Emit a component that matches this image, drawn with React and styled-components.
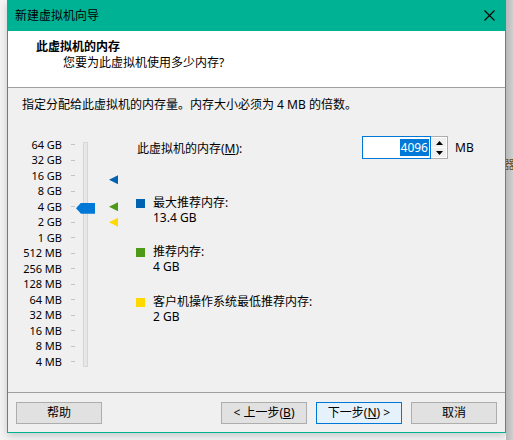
import React from 'react';
import styled, { createGlobalStyle } from 'styled-components';

const GlobalStyle = createGlobalStyle`
  html, body {
    margin: 0;
    padding: 0;
    background: #f4f4f4;
  }
  body {
    font-family: "Noto Sans", "Noto Sans CJK SC", sans-serif;
    font-size: 12px;
    color: #000;
  }
`;

const SCALE = ['64 GB', '32 GB', '16 GB', '8 GB', '4 GB', '2 GB', '1 GB', '512 MB', '256 MB', '128 MB', '64 MB', '32 MB', '16 MB', '8 MB', '4 MB'];
const ROW = 15.5;

// position of a memory value (in GB) on the scale, relative to the first row
const posOf = (gb) => (6 - Math.log2(gb)) * ROW + ROW / 2;

const MARKERS = [
  { gb: 13.4, color: '#0063b1' },
  { gb: 4, color: '#4c9a17' },
  { gb: 2, color: '#ffd800' },
];

const LEGEND = [
  { color: '#0063b1', label: '最大推荐内存:', value: '13.4 GB' },
  { color: '#4c9a17', label: '推荐内存:', value: '4 GB' },
  { color: '#ffd800', label: '客户机操作系统最低推荐内存:', value: '2 GB' },
];

const App = () => {
  return (
    <>
      <GlobalStyle />
      <Page>
        <Window>
          <TitleBar>
            <TitleText>新建虚拟机向导</TitleText>
            <CloseButton>
              <svg width='11' height='11' viewBox='0 0 11 11'>
                <path d='M0.5 0.5 L10.5 10.5 M10.5 0.5 L0.5 10.5' stroke='#000' strokeWidth='1.1' />
              </svg>
            </CloseButton>
          </TitleBar>

          <Header>
            <HeaderTitle>此虚拟机的内存</HeaderTitle>
            <HeaderSub>您要为此虚拟机使用多少内存?</HeaderSub>
          </Header>

          <Body>
            <Intro>指定分配给此虚拟机的内存量。内存大小必须为 4 MB 的倍数。</Intro>
            <Main>
              <Slider>
                <Scale>
                  {SCALE.map((s) => (
                    <ScaleRow key={s}>
                      <ScaleLabel>{s}</ScaleLabel>
                      <Tick />
                    </ScaleRow>
                  ))}
                </Scale>
                <Track>
                  <Thumb style={{ top: posOf(4) - 4.5 - 5.5 }} />
                </Track>
                <Markers>
                  {MARKERS.map((m) => (
                    <Marker key={m.gb} color={m.color} style={{ top: posOf(m.gb) - 4.5 }} />
                  ))}
                </Markers>
              </Slider>

              <RightCol>
                <MemoryRow>
                  <MemoryLabel>
                    此虚拟机的内存(<u>M</u>):
                  </MemoryLabel>
                  <NumberBox>
                    <Selected>4096</Selected>
                  </NumberBox>
                  <Spin>
                    <SpinHalf>
                      <svg width='7' height='4' viewBox='0 0 7 4'>
                        <path d='M0 4 L3.5 0 L7 4 Z' fill='#000' />
                      </svg>
                    </SpinHalf>
                    <SpinHalf>
                      <svg width='7' height='4' viewBox='0 0 7 4'>
                        <path d='M0 0 L3.5 4 L7 0 Z' fill='#000' />
                      </svg>
                    </SpinHalf>
                  </Spin>
                  <Unit>MB</Unit>
                </MemoryRow>

                <Legend>
                  {LEGEND.map((l) => (
                    <LegendItem key={l.label}>
                      <Swatch color={l.color} />
                      <div>
                        <LegendLine>{l.label}</LegendLine>
                        <LegendLine>{l.value}</LegendLine>
                      </div>
                    </LegendItem>
                  ))}
                </Legend>
              </RightCol>
            </Main>
          </Body>

          <Footer>
            <Button>帮助</Button>
            <Spacer />
            <Button>
              &lt; 上一步(<u>B</u>)
            </Button>
            <Button primary>
              下一步(<u>N</u>) &gt;
            </Button>
            <Button>取消</Button>
          </Footer>
        </Window>
        <Behind>
          <BehindText>器</BehindText>
        </Behind>
      </Page>
    </>
  );
};

export default App;

const Page = styled.div`
  display: flex;
  width: 513px;
  height: 440px;
  padding-left: 7px;
  box-sizing: border-box;
  overflow: hidden;
`;

const Window = styled.div`
  width: 499px;
  height: 433px;
  flex: none;
  box-sizing: border-box;
  border: 1px solid #00b294;
  border-top: none;
  display: flex;
  flex-direction: column;
  background: #f0f0f0;
  box-shadow: 0 3px 8px rgba(0, 0, 0, 0.18);
`;

const TitleBar = styled.div`
  height: 31px;
  background: #00b294;
  display: flex;
  align-items: center;
  justify-content: space-between;
  padding: 0 11px 0 8px;
  margin: 0 -1px;
`;

const TitleText = styled.span`
  font-size: 12px;
  line-height: 16px;
`;

const CloseButton = styled.div`
  width: 11px;
  height: 11px;
  display: flex;
`;

const Header = styled.div`
  height: 56px;
  background: #fff;
  border-bottom: 1px solid #a0a0a0;
  padding: 8px 0 0 28px;
  box-sizing: content-box;
  height: 48px;
`;

const HeaderTitle = styled.div`
  font-weight: 700;
  line-height: 16px;
`;

const HeaderSub = styled.div`
  line-height: 16px;
  padding-left: 27px;
`;

const Body = styled.div`
  height: 304px;
  border-bottom: 1px solid #a0a0a0;
  padding: 9px 0 0 14px;
  box-sizing: border-box;
  height: 305px;
`;

const Intro = styled.div`
  line-height: 16px;
`;

const Main = styled.div`
  display: flex;
  margin-top: 23px;
  margin-left: -2px;
`;

const Slider = styled.div`
  display: flex;
  width: 116px;
  padding-top: 1px;
`;

const Scale = styled.div`
  display: flex;
  flex-direction: column;
`;

const ScaleRow = styled.div`
  height: ${ROW}px;
  display: flex;
  align-items: center;
`;

const ScaleLabel = styled.span`
  width: 42px;
  text-align: right;
  font-size: 11px;
  line-height: 14px;
  white-space: nowrap;
`;

const Tick = styled.span`
  width: 4px;
  height: 1px;
  margin-left: 9px;
  background: #c4c4c4;
`;

const Track = styled.div`
  position: relative;
  width: 3px;
  height: 223px;
  margin: 5px 0 0 8px;
  background: #e7e7e7;
  border: 1px solid #d6d6d6;
`;

const Thumb = styled.div`
  position: absolute;
  left: -8px;
  width: 19px;
  height: 11px;
  background: #0078d7;
  clip-path: polygon(0 50%, 5px 0, 100% 0, 100% 100%, 5px 100%);
`;

const Markers = styled.div`
  position: relative;
  width: 9px;
  margin-left: 21px;
`;

const Marker = styled.div`
  position: absolute;
  left: 0;
  width: 9px;
  height: 9px;
  background: ${(props) => props.color};
  clip-path: polygon(0 50%, 100% 0, 100% 100%);
`;

const RightCol = styled.div`
  display: flex;
  flex-direction: column;
  padding-left: 0;
`;

const MemoryRow = styled.div`
  display: flex;
  align-items: center;
  height: 23px;
`;

const MemoryLabel = styled.span`
  width: 226px;
  padding-left: 1px;
  box-sizing: border-box;
  line-height: 16px;
  margin-top: 2px;
`;

const NumberBox = styled.div`
  width: 69px;
  height: 23px;
  box-sizing: border-box;
  border: 1px solid #0078d7;
  background: #fff;
  display: flex;
  align-items: center;
  justify-content: flex-end;
  padding-right: 1px;
`;

const Selected = styled.span`
  background: #0078d7;
  color: #fff;
  line-height: 17px;
  padding: 0 1px;
`;

const Spin = styled.div`
  width: 17px;
  height: 23px;
  box-sizing: border-box;
  border: 1px solid #adadad;
  border-left: none;
  background: #fff;
  display: flex;
  flex-direction: column;
  padding: 1px;
  gap: 1px;
`;

const SpinHalf = styled.div`
  flex: 1;
  background: #f0f0f0;
  display: flex;
  align-items: center;
  justify-content: center;
`;

const Unit = styled.span`
  margin-left: 7px;
  line-height: 16px;
`;

const Legend = styled.div`
  display: flex;
  flex-direction: column;
  gap: 19.5px;
  margin-top: 35.5px;
`;

const LegendItem = styled.div`
  display: flex;
  align-items: flex-start;
`;

const Swatch = styled.span`
  width: 9px;
  height: 9px;
  margin: 4px 8px 0 0;
  background: ${(props) => props.color};
`;

const LegendLine = styled.div`
  line-height: 15px;
  white-space: nowrap;
`;

const Footer = styled.div`
  display: flex;
  align-items: flex-start;
  gap: 9px;
  padding: 9px 0 0 8px;
  flex: 1;
`;

const Spacer = styled.div`
  flex: 1;
`;

const Button = styled.div`
  width: 86px;
  height: 22px;
  box-sizing: border-box;
  border: 1px solid ${(props) => (props.primary ? '#0078d7' : '#adadad')};
  background: ${(props) => (props.primary ? '#e5f1fb' : '#e1e1e1')};
  display: flex;
  align-items: center;
  justify-content: center;
  line-height: 16px;
  white-space: nowrap;
  &:last-child {
    margin-right: 8px;
  }
`;

const Behind = styled.div`
  flex: 1;
  height: 100%;
  background: linear-gradient(to right, #b8b8b8, #cfcfcf);
  position: relative;
  overflow: hidden;
`;

const BehindText = styled.span`
  position: absolute;
  top: 155px;
  left: -3px;
  color: #6b4a1e;
`;
